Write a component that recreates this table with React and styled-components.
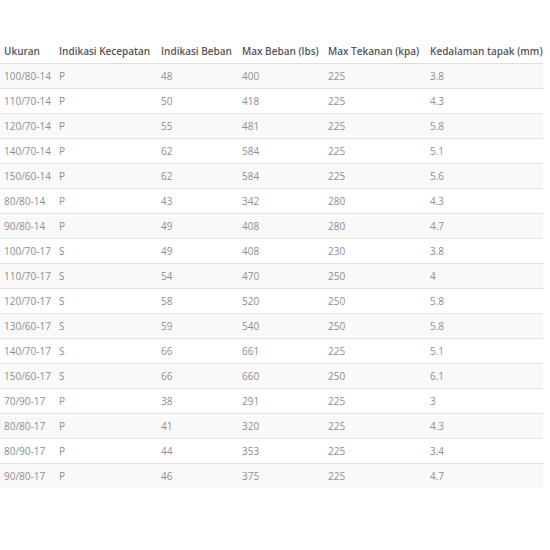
import React from 'react';
import styled, { createGlobalStyle } from 'styled-components';

const GlobalStyle = createGlobalStyle`
  body {
    margin: 0;
    background: #fff;
    font-family: 'Open Sans', sans-serif;
  }
`;

const columns = [
  { label: 'Ukuran', width: 55 },
  { label: 'Indikasi Kecepatan', width: 102 },
  { label: 'Indikasi Beban', width: 81 },
  { label: 'Max Beban (lbs)', width: 86 },
  { label: 'Max Tekanan (kpa)', width: 102 },
  { label: 'Kedalaman tapak (mm)', width: 117 },
];

const rows = [
  ['100/80-14', 'P', '48', '400', '225', '3.8'],
  ['110/70-14', 'P', '50', '418', '225', '4.3'],
  ['120/70-14', 'P', '55', '481', '225', '5.8'],
  ['140/70-14', 'P', '62', '584', '225', '5.1'],
  ['150/60-14', 'P', '62', '584', '225', '5.6'],
  ['80/80-14', 'P', '43', '342', '280', '4.3'],
  ['90/80-14', 'P', '49', '408', '280', '4.7'],
  ['100/70-17', 'S', '49', '408', '230', '3.8'],
  ['110/70-17', 'S', '54', '470', '250', '4'],
  ['120/70-17', 'S', '58', '520', '250', '5.8'],
  ['130/60-17', 'S', '59', '540', '250', '5.8'],
  ['140/70-17', 'S', '66', '661', '225', '5.1'],
  ['150/60-17', 'S', '66', '660', '250', '6.1'],
  ['70/90-17', 'P', '38', '291', '225', '3'],
  ['80/80-17', 'P', '41', '320', '225', '4.3'],
  ['80/90-17', 'P', '44', '353', '225', '3.4'],
  ['90/80-17', 'P', '46', '375', '225', '4.7'],
];

const Wrapper = styled.div`
  padding-top: 38px;
`;

const Table = styled.table`
  width: 543px;
  border-collapse: collapse;
  table-layout: fixed;
  font-size: 10px;
`;

const HeadCell = styled.th`
  box-sizing: border-box;
  height: 25px;
  padding: 2px 4px 0;
  text-align: left;
  font-weight: 600;
  color: #555;
  white-space: nowrap;
  border-bottom: 1px solid #ddd;
`;

const Row = styled.tr`
  background: ${p => (p.$striped ? '#f9f9f9' : '#fff')};
  border-top: 1px solid #e2e2e2;
`;

const Cell = styled.td`
  box-sizing: border-box;
  height: 25px;
  padding: 1px 4px 0;
  color: #8e8e8e;
  white-space: nowrap;
`;

export default function App() {
  return (
    <Wrapper>
      <GlobalStyle />
      <Table>
        <colgroup>
          {columns.map(c => (
            <col key={c.label} style={{ width: c.width }} />
          ))}
        </colgroup>
        <thead>
          <tr>
            {columns.map(c => (
              <HeadCell key={c.label}>{c.label}</HeadCell>
            ))}
          </tr>
        </thead>
        <tbody>
          {rows.map((r, i) => (
            <Row key={r[0]} $striped={i % 2 === 0}>
              {r.map((v, j) => (
                <Cell key={j}>{v}</Cell>
              ))}
            </Row>
          ))}
        </tbody>
      </Table>
    </Wrapper>
  );
}
